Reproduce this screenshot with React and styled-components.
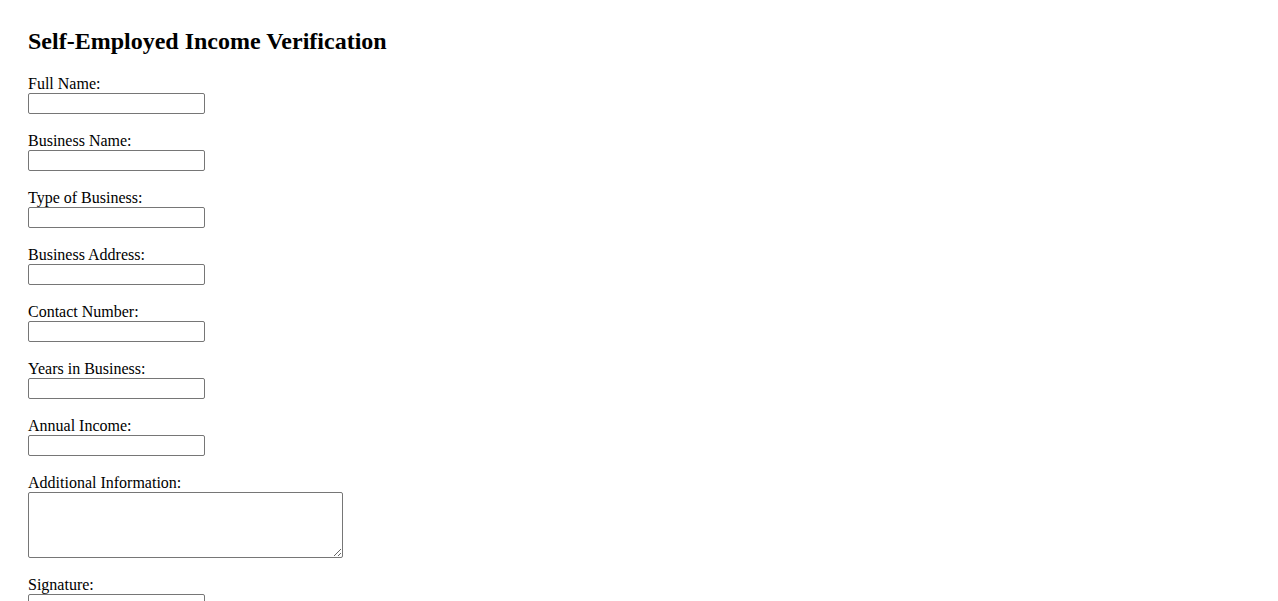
import React from "react";
import styled, { createGlobalStyle } from "styled-components";

const GlobalStyle = createGlobalStyle`
  body {
    margin: 8px;
    background: #ffffff;
    color: #000000;
    font-family: "Liberation Serif", "Times New Roman", serif;
  }
`;

const Page = styled.div`
  padding: 20px;
`;

const Title = styled.h2`
  margin: 0 0 20px;
  font-size: 24px;
  line-height: 27px;
  font-weight: bold;
`;

const Form = styled.form`
  display: flex;
  flex-direction: column;
  align-items: flex-start;
`;

const Field = styled.div`
  display: flex;
  flex-direction: column;
  align-items: flex-start;
  margin-bottom: ${(p) => p.$gap || 18}px;
`;

const Label = styled.label`
  display: block;
  font-size: 16px;
  line-height: 18px;
  height: 18px;
`;

const TextInput = styled.input`
  box-sizing: border-box;
  width: 177px;
  height: 21px;
  margin: 0;
  padding: 1px 2px;
  border: 1px solid #767676;
  border-radius: 2px;
  background: #fff;
  font: 13.33px Arial, "Liberation Sans", sans-serif;
`;

const TextArea = styled.textarea`
  box-sizing: border-box;
  width: 315px;
  height: 66px;
  margin: 0;
  padding: 2px;
  border: 1px solid #767676;
  border-radius: 2px;
  background: #fff;
  font: 13.33px monospace;
`;

const fields = [
  ["fullName", "Full Name:"],
  ["businessName", "Business Name:"],
  ["businessType", "Type of Business:"],
  ["businessAddress", "Business Address:"],
  ["contactNumber", "Contact Number:"],
  ["yearsInBusiness", "Years in Business:"],
  ["annualIncome", "Annual Income:"],
];

export default function App() {
  return (
    <>
      <GlobalStyle />
      <Page>
        <Title>Self-Employed Income Verification</Title>
        <Form onSubmit={(e) => e.preventDefault()}>
          {fields.map(([id, label]) => (
            <Field key={id}>
              <Label htmlFor={id}>{label}</Label>
              <TextInput id={id} type="text" />
            </Field>
          ))}
          <Field>
            <Label htmlFor="additionalInfo">Additional Information:</Label>
            <TextArea id="additionalInfo" />
          </Field>
          <Field>
            <Label htmlFor="signature">Signature:</Label>
            <TextInput id="signature" type="text" />
          </Field>
        </Form>
      </Page>
    </>
  );
}
